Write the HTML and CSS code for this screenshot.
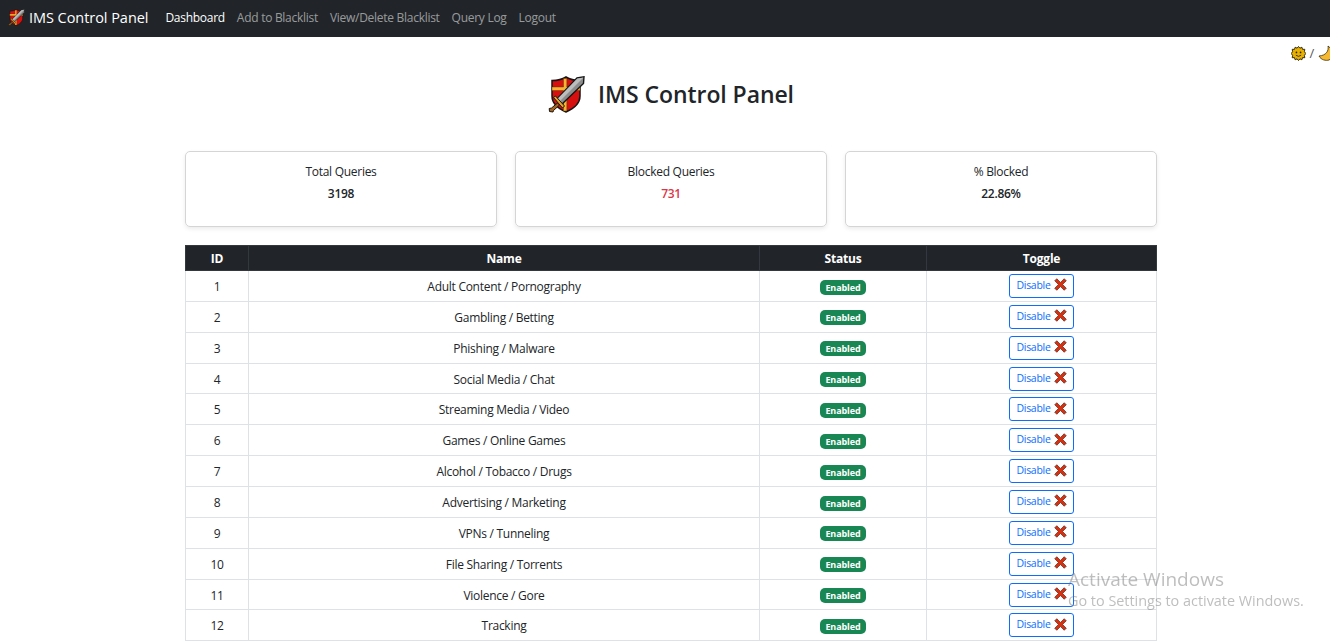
FILE: index.html
```html
<!DOCTYPE html>
<html lang="en">
<head>
    <meta charset="UTF-8">
    <title>IMS Control Panel</title>
    <link rel="stylesheet" href="styles.css">
</head>
<body>
    <svg class="defs" width="0" height="0">
        <defs>
            <symbol id="shield" viewBox="0 0 37 37">
                <path d="M4 4.500 C9 4.500 14 3.500 18 1 C22 3.500 27 4.500 32 4.500 L32 20 C32 28 25 33 18 36 C11 33 4 28 4 20 Z" fill="#d80f0f" stroke="#161616" stroke-width="1.500"/>
                <path d="M15.500 2.500 H18.800 V11 H32 V14.500 H18.800 V35 H15.500 V14.500 H4 V11 H15.500 Z" fill="#f2b632" stroke="#4a3208" stroke-width=".4"/>
                <path d="M36 .8 L35.500 7.500 L13.500 28.500 L8.500 23.500 L29 2 Z" fill="#8c8c8c" stroke="#161616" stroke-width="1.400"/>
                <path d="M35.500 1.500 L11 26 L8.800 23.600 L29.300 2.500 Z" fill="#bdbdbd"/>
                <path d="M5.500 21.500 L7.500 20 L16.500 30 L14.500 32 Z" fill="#eba51f" stroke="#161616" stroke-width="1"/>
                <path d="M9.500 27 L11.500 29 L5.500 34.500 L5 36 L1.500 35.500 L1.200 32.500 L3.500 32 Z" fill="#a8641c" stroke="#161616" stroke-width="1"/>
            </symbol>
            <symbol id="cross" viewBox="0 0 14 14">
                <path d="M.8 3 L3 .8 L7 4.800 L11 .8 L13.200 3 L9.200 7 L13.200 11 L11 13.200 L7 9.200 L3 13.200 L.8 11 L4.800 7 Z" fill="#d9300f" stroke="#5a2a20" stroke-width=".8"/>
            </symbol>
        </defs>
    </svg>

    <nav class="navbar">
        <a class="brand" href="#"><svg class="brand-logo"><use href="#shield"/></svg>IMS Control Panel</a>
        <a class="nav-link active" href="#">Dashboard</a>
        <a class="nav-link" href="#">Add to Blacklist</a>
        <a class="nav-link" href="#">View/Delete Blacklist</a>
        <a class="nav-link" href="#">Query Log</a>
        <a class="nav-link" href="#">Logout</a>
    </nav>

    <div class="theme-switch">
        <svg class="theme-icon" viewBox="0 0 16 16">
            <path d="M8 .5 L9.500 2.300 L11.600 1.300 L12.300 3.600 L14.700 3.500 L14.300 5.900 L15.700 8 L14.300 10.100 L14.700 12.500 L12.300 12.400 L11.600 14.700 L9.500 13.700 L8 15.500 L6.500 13.700 L4.400 14.700 L3.700 12.400 L1.300 12.500 L1.700 10.100 L.3 8 L1.700 5.900 L1.300 3.500 L3.700 3.600 L4.400 1.300 L6.500 2.300 Z" fill="#e8b000" stroke="#2a2208" stroke-width="1"/>
            <circle cx="5.800" cy="6.800" r=".9" fill="#2a2208"/>
            <circle cx="10.200" cy="6.800" r=".9" fill="#2a2208"/>
            <path d="M5.200 9.800 Q8 12.300 10.800 9.800" fill="none" stroke="#2a2208" stroke-width=".9"/>
        </svg>
        <a class="theme-sep" href="#">/</a>
        <svg class="theme-icon moon" viewBox="0 0 16 16">
            <path d="M10 1 C11 6 8 10.500 1 11 C3 15 8 16 11 15 C15.500 13 16 5 10 1 Z" fill="#f5b82e" stroke="#3a2a08" stroke-width=".8"/>
        </svg>
    </div>

    <h1 class="page-title"><svg class="title-logo"><use href="#shield"/></svg>IMS Control Panel</h1>

    <main class="content">
        <section class="stats">
            <div class="stat-card">
                <div class="stat-label">Total Queries</div>
                <div class="stat-value">3198</div>
            </div>
            <div class="stat-card">
                <div class="stat-label">Blocked Queries</div>
                <div class="stat-value text-danger">731</div>
            </div>
            <div class="stat-card">
                <div class="stat-label">% Blocked</div>
                <div class="stat-value">22.86%</div>
            </div>
        </section>

        <table class="rules">
            <colgroup>
                <col class="col-id"><col class="col-name"><col class="col-status"><col class="col-toggle">
            </colgroup>
            <thead>
                <tr><th>ID</th><th>Name</th><th>Status</th><th>Toggle</th></tr>
            </thead>
            <tbody>
                <tr><td class="cell-text">1</td><td class="cell-text">Adult Content / Pornography</td><td><span class="badge">Enabled</span></td><td><a class="btn" href="#">Disable <svg class="btn-icon"><use href="#cross"/></svg></a></td></tr>
                <tr><td class="cell-text">2</td><td class="cell-text">Gambling / Betting</td><td><span class="badge">Enabled</span></td><td><a class="btn" href="#">Disable <svg class="btn-icon"><use href="#cross"/></svg></a></td></tr>
                <tr><td class="cell-text">3</td><td class="cell-text">Phishing / Malware</td><td><span class="badge">Enabled</span></td><td><a class="btn" href="#">Disable <svg class="btn-icon"><use href="#cross"/></svg></a></td></tr>
                <tr><td class="cell-text">4</td><td class="cell-text">Social Media / Chat</td><td><span class="badge">Enabled</span></td><td><a class="btn" href="#">Disable <svg class="btn-icon"><use href="#cross"/></svg></a></td></tr>
                <tr><td class="cell-text">5</td><td class="cell-text">Streaming Media / Video</td><td><span class="badge">Enabled</span></td><td><a class="btn" href="#">Disable <svg class="btn-icon"><use href="#cross"/></svg></a></td></tr>
                <tr><td class="cell-text">6</td><td class="cell-text">Games / Online Games</td><td><span class="badge">Enabled</span></td><td><a class="btn" href="#">Disable <svg class="btn-icon"><use href="#cross"/></svg></a></td></tr>
                <tr><td class="cell-text">7</td><td class="cell-text">Alcohol / Tobacco / Drugs</td><td><span class="badge">Enabled</span></td><td><a class="btn" href="#">Disable <svg class="btn-icon"><use href="#cross"/></svg></a></td></tr>
                <tr><td class="cell-text">8</td><td class="cell-text">Advertising / Marketing</td><td><span class="badge">Enabled</span></td><td><a class="btn" href="#">Disable <svg class="btn-icon"><use href="#cross"/></svg></a></td></tr>
                <tr><td class="cell-text">9</td><td class="cell-text">VPNs / Tunneling</td><td><span class="badge">Enabled</span></td><td><a class="btn" href="#">Disable <svg class="btn-icon"><use href="#cross"/></svg></a></td></tr>
                <tr><td class="cell-text">10</td><td class="cell-text">File Sharing / Torrents</td><td><span class="badge">Enabled</span></td><td><a class="btn" href="#">Disable <svg class="btn-icon"><use href="#cross"/></svg></a></td></tr>
                <tr><td class="cell-text">11</td><td class="cell-text">Violence / Gore</td><td><span class="badge">Enabled</span></td><td><a class="btn" href="#">Disable <svg class="btn-icon"><use href="#cross"/></svg></a></td></tr>
                <tr><td class="cell-text">12</td><td class="cell-text">Tracking</td><td><span class="badge">Enabled</span></td><td><a class="btn" href="#">Disable <svg class="btn-icon"><use href="#cross"/></svg></a></td></tr>
            </tbody>
        </table>
    </main>

    <!-- windows watermark -->
    <div class="watermark">
        <div class="watermark-title">Activate Windows</div>
        <div class="watermark-text">Go to Settings to activate Windows.</div>
    </div>
</body>
</html>
```

FILE: styles.css
```css
* {
    box-sizing: border-box;
}

html, body {
    height: 644px;
    overflow: hidden;
}

/* page is a little wider than the window, the moon gets cut off */
body {
    width: 1342px;
    margin: 0;
    background-color: #fff;
    color: #212529;
    font-family: "Open Sans", "Noto Sans", sans-serif;
    font-size: 12px;
    letter-spacing: -.28px;
}

a {
    text-decoration: none;
}

.defs {
    display: block;
    height: 0;
}

/* top bar */
.navbar {
    display: flex;
    align-items: center;
    height: 37px;
    padding-left: 8px;
    padding-bottom: 2px;
    background-color: #212529;
}

.brand {
    display: flex;
    align-items: center;
    margin-right: 17px;
    color: #fff;
    font-size: 14.500px;
    letter-spacing: -.05px;
}

.brand-logo {
    width: 17px;
    height: 17px;
    margin-right: 4px;
}

.nav-link {
    margin-right: 12px;
    color: rgba(255, 255, 255, .55);
}

.nav-link.active {
    color: #fff;
}

.theme-switch {
    display: flex;
    justify-content: flex-end;
    align-items: center;
    gap: 4px;
    height: 16px;
    margin-top: 8px;
    padding-right: 8px;
}

.theme-icon {
    width: 15px;
    height: 15px;
}

.moon {
    width: 16px;
    height: 16px;
}

.theme-sep {
    color: #555;
    font-size: 13px;
}

/* heading */
.page-title {
    display: flex;
    justify-content: center;
    align-items: center;
    gap: 13px;
    height: 40px;
    margin: 13px 0 37px;
    font-size: 23px;
    font-weight: 600;
    letter-spacing: -.08px;
}

.title-logo {
    width: 37px;
    height: 37px;
}

.content {
    width: 972px;
    margin: 0 auto;
}

/* cards */
.stats {
    display: grid;
    grid-template-columns: repeat(3, 1fr);
    gap: 18px;
    margin-bottom: 18px;
}

.stat-card {
    height: 76px;
    padding-top: 11px;
    border: 1px solid #d5d5d5;
    border-radius: 5px;
    box-shadow: 0 2px 4px rgba(0, 0, 0, .08);
    text-align: center;
}

.stat-label {
    margin-bottom: 5px;
    line-height: 17px;
}

.stat-value {
    font-weight: 600;
    line-height: 17px;
}

.text-danger {
    color: #dc3545;
}

/* table */
.rules {
    width: 971px;
    table-layout: fixed;
    border-collapse: collapse;
}

.col-id {
    width: 63px;
}

.col-name {
    width: 511px;
}

.col-status {
    width: 167px;
}

.col-toggle {
    width: 230px;
}

.rules th, .rules td {
    border: 1px solid #dee2e6;
    text-align: center;
    vertical-align: middle;
}

.rules th {
    height: 25px;
    padding: 0;
    background-color: #212529;
    border-color: #32383e;
    color: #fff;
    font-weight: 700;
    letter-spacing: -.2px;
}

.rules td {
    height: 30.860px;
    padding: 0;
}

.rules .cell-text {
    padding-top: 1px;
}

.badge {
    display: inline-block;
    padding: 0 5px;
    height: 15px;
    border-radius: 5px;
    background-color: #198754;
    color: #fff;
    font-size: 9px;
    font-weight: 700;
    letter-spacing: -.1px;
    line-height: 15px;
    vertical-align: middle;
}

.btn {
    display: inline-flex;
    justify-content: center;
    align-items: center;
    gap: 3px;
    width: 65px;
    height: 24px;
    padding-bottom: 2px;
    border: 1px solid #0d6efd;
    border-radius: 3px;
    color: #0d6efd;
    font-size: 10.500px;
    vertical-align: middle;
}

.btn-icon {
    width: 13px;
    height: 13px;
}

.watermark {
    position: fixed;
    left: 1068px;
    top: 567px;
    color: rgba(110, 110, 110, .45);
    letter-spacing: 0;
    pointer-events: none;
}

.watermark-title {
    font-size: 19px;
    line-height: 24px;
}

.watermark-text {
    font-size: 14.400px;
    line-height: 20px;
}
```
